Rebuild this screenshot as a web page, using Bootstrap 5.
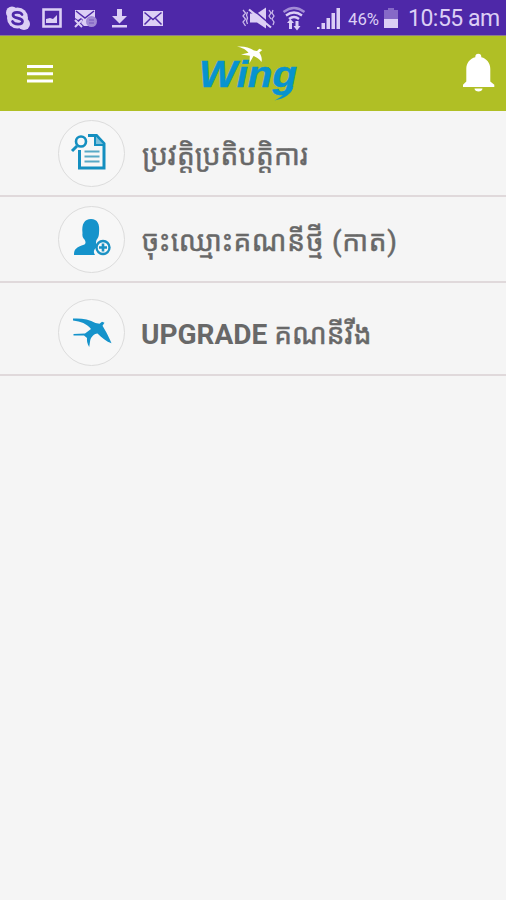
<!DOCTYPE html>
<html lang="km">
<head>
<meta charset="utf-8">
<meta name="viewport" content="width=device-width, initial-scale=1">
<title>Wing</title>
<link href="https://cdn.jsdelivr.net/npm/bootstrap@5.3.0/dist/css/bootstrap.min.css" rel="stylesheet">
<style>
body{background:#f5f5f5;font-family:Roboto,"Noto Sans Khmer","Noto Sans",sans-serif;min-height:900px}
svg{display:block;flex:none}
.status-bar{height:36px;background:#4e28a8;border-bottom:1px solid #8d7a8c;color:#dccff5}
.clock{font-size:23px;letter-spacing:-.5px;line-height:37px;height:35px;margin-left:8px;white-space:nowrap}
.app-bar{height:75px;background:#b0bf25}
.menu-row{border-bottom:2px solid #e0d9db;height:86px;padding-left:58px;color:#686868;font-size:28px;line-height:1}
.menu-row.tall{height:93px;padding-top:8px}
.ring{width:67px;height:67px;border:1px solid #dcdcdc;background:#f7f7f7;flex:none;margin-right:17px}
.menu-text{white-space:nowrap;padding-top:6px;-webkit-text-stroke:.5px #686868}
.menu-text.spaced{letter-spacing:.7px}
.tall .menu-text{padding-top:4px;margin-left:-1px}
.menu-text b{font-size:28px;font-weight:700;-webkit-text-stroke:0}
</style>
</head>
<body>
<header class="status-bar d-flex">
<svg width="400" height="35" viewBox="0 0 400 35" fill="#dccff5">
<g><circle cx="17.500" cy="18" r="10.500"/><circle cx="12" cy="12.500" r="6"/><circle cx="24" cy="24" r="6"/><path d="M22 14.500C20.500 11.500 13 11.500 13 15c0 4 9.500 2.300 9.500 6.300 0 3.800-8.500 3.700-10 .2" fill="none" stroke="#4e28a8" stroke-width="2.700" stroke-linecap="round"/></g>
<path d="M43.500 9.500h17v17h-17z" fill="none" stroke="#dccff5" stroke-width="2.600"/><path d="M46 23v-4l4-1 3 1 4-4v8z"/>
<path d="M75 10h20v9l-6 7H84l-3-3 2-3-2-2-3 2-3-2z"/><path d="M76 11l9 7 9-7" fill="none" stroke="#4e28a8" stroke-width="1.500"/><path d="M75 20l7 7m0-7l-7 7" stroke="#dccff5" stroke-width="2"/><circle cx="91.500" cy="21.500" r="5.500" fill="#a18ad4"/><path d="M89 20h5M89 23h5" stroke="#7656bd"/>
<path d="M117 9h5v7h5l-7.500 7.500L112 16h5zM112 25h15v2.400h-15z"/>
<path d="M143 11h20v15h-20z"/><path d="M144.500 12.500l8.500 7 8.500-7M144.500 24.500l6-6m11 6l-6-6" fill="none" stroke="#4e28a8" stroke-width="1.500"/>
<path d="M250 13.500h7l9-6v21l-9-6h-7z"/><path d="M251 8l20 17" stroke="#4e28a8" stroke-width="1.600"/><path d="M249 9.500l22 18" stroke="#dccff5" stroke-width="2.200"/><path d="M243 10l2.500 3-2.500 3 2.500 3-2.500 3 2.500 4M247.500 12l-1 3 1 3-1 3 1 3M269 10l2 3-2 3 2 3M273 10l-1 3 2 3-2 3 2 3-1 3" fill="none" stroke="#c9b8ea" stroke-width="1.300"/>
<g fill="none" stroke="#dccff5" stroke-width="2.300"><path d="M283.500 12q10.500-8 21 0" opacity=".6"/><path d="M286 15.500q8-6 16 0"/><path d="M289 19q5-4 10 0"/></g><path d="M290.500 19l3.500 4h-2v6h-3v-6h-2zM297 30.500l-3.500-4.500h2v-5h3v5h2z"/>
<path d="M317 27h2.500v2H317zM321.500 23h3.500v6h-3.500zM326.500 18h3.500v11h-3.500zM331.500 13h3.500v16h-3.500zM336.500 8h3.500v21h-3.500z"/>
<text x="348" y="25" font-family="Roboto" font-size="17" textLength="31" lengthAdjust="spacingAndGlyphs">46%</text>
<path d="M388 8h6v2h4v9h-14v-9h4z" fill="#8669c7"/><path d="M384 19h14v9h-14z"/>
</svg>
<span class="clock">10:55 am</span>
</header>
<nav class="app-bar">
<svg width="506" height="75" viewBox="0 36 506 75">
<path d="M27 65h26v3H27zM27 72.300h26v3H27zM27 79.600h26v3H27z" fill="#fff"/>
<text x="199" y="86.500" font-family="'Liberation Sans',Arial,sans-serif" font-size="36" font-weight="700" font-style="italic" fill="#0793cf" stroke="#0793cf" stroke-width=".5" textLength="98" lengthAdjust="spacingAndGlyphs">Wing</text>
<path d="M293.500 86c-1.500 7.500-8 12.500-19 14.500 6-3 9-5.500 11.500-9.500z" fill="#0793cf"/>
<path d="M237 46.500c7-.5 12 .5 17 4l3 .5 2.300-2.200 3 1.200-3 2.500c2 3 3 6 2.200 9.500-2-3-5-5.200-8-6l-4 7 .3-7.200-8.800-1.200 7.500-1.800c-3-3.500-6-5-11.500-6.300z" fill="#fff"/>
<path d="M463 87v-2.200l3.300-3.300V69c0-6 3.700-10.500 9-11.700v-.5a3 3 0 0 1 6 0v.5c5.200 1.200 9 5.700 9 11.700v12.500l4 3.300V87zM474.500 88.500h8c0 4-8 4-8 0z" fill="#fff"/>
</svg>
</nav>
<main>
<div class="menu-row d-flex align-items-center">
<span class="ring rounded-circle d-flex align-items-center justify-content-center"><svg width="65" height="65" viewBox="59 121 65 65" fill="none" stroke="#148fc0"><path d="M88 135.500h8.500l7.500 8v24.500H79.500V150" stroke-width="3"/><path d="M95 136v9h9" fill="#7fc0da" stroke-width="2"/><circle cx="81" cy="141.500" r="5" stroke-width="2.600"/><path d="M77 146l-5 5" stroke-width="3"/><path d="M84.500 151.500h15M84.500 156.500h15M84.500 161.500h15" stroke="#58a9c6" stroke-width="1.800"/></svg></span>
<span class="menu-text">ប្រវត្តិប្រតិបត្តិការ</span>
</div>
<div class="menu-row d-flex align-items-center">
<span class="ring rounded-circle d-flex align-items-center justify-content-center"><svg width="65" height="65" viewBox="59 207 65 65"><path d="M74 255c0-6 2-7.500 10.500-10.500 1.500-1 1.300-3 0-5-1.700-1.500-2.500-4-2-6.500-1-9 2-14 8.500-14s9 5 8 14c0 3-1 5-2.500 7-1 3-.5 5 2.500 6-4.500 2-6.500 5-4 9z" fill="#1593cb"/><circle cx="103" cy="247.500" r="6.500" fill="#f7f7f7" stroke="#1a91c4" stroke-width="2.400"/><path d="M103 243.500v8M99 247.500h8" stroke="#1a91c4" stroke-width="2.600"/></svg></span>
<span class="menu-text spaced">ចុះឈ្មោះគណនីថ្មី (កាត)</span>
</div>
<div class="menu-row tall d-flex align-items-center">
<span class="ring rounded-circle d-flex align-items-center justify-content-center"><svg width="65" height="65" viewBox="59 300 65 65"><path d="M73 318.500c8-.5 16 .5 22.500 4.500l4 .7 2.500-2 2.500 1-2 3 3.500 6c2 3.500 3.500 7 5.500 11.500-5-1.500-10-5.500-14-9.700-4 .5-6.500 3.500-7.300 7l-1 6.500c-2-3.500-2.500-6-2.200-9l-3-2.500H73.500v-1.500l11.500-.5 6-4.500c-4.500-5.500-10-7.500-18-8.500z" fill="#1593cb"/></svg></span>
<span class="menu-text"><b>UPGRADE</b> គណនីវីង</span>
</div>
</main>
<script src="https://cdn.jsdelivr.net/npm/bootstrap@5.3.0/dist/js/bootstrap.bundle.min.js"></script>
</body>
</html>
